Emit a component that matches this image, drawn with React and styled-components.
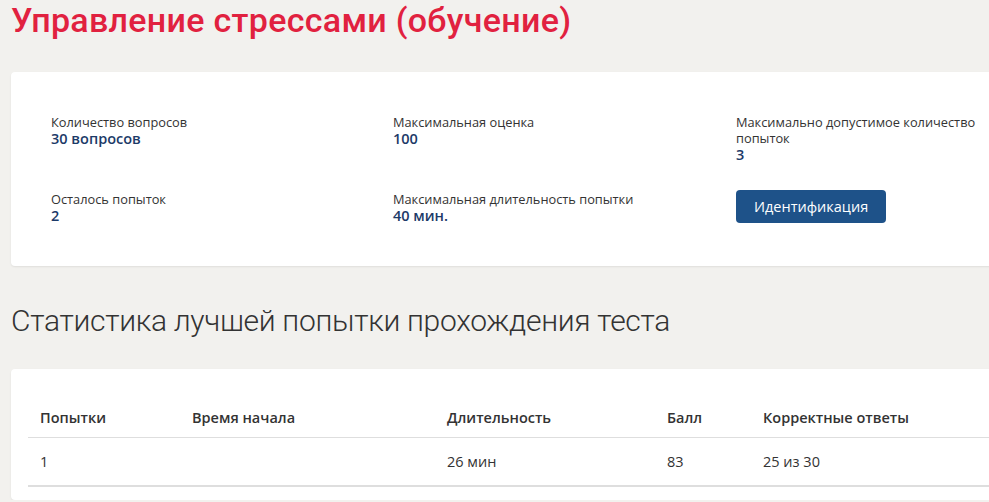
import React from "react";
import styled, { createGlobalStyle } from "styled-components";

const Global = createGlobalStyle`
  html, body { margin: 0; padding: 0; background: #f2f1ee; overflow: hidden; }
  body { font-family: "Open Sans", "Noto Sans", sans-serif; color: #333; }
`;

const Page = styled.div`
  width: 1040px;
  padding: 0 0 0 11px;
  display: flex;
  flex-direction: column;
`;

const Title = styled.h1`
  margin: 0;
  padding-top: 0;
  font-family: "Roboto", "Noto Sans", sans-serif;
  font-weight: 500;
  font-size: 34px;
  line-height: 40px;
  color: #e1213f;
  letter-spacing: 0.3px;
`;

const Card = styled.section`
  background: #fff;
  border-radius: 4px;
  box-shadow: 0 1px 2px rgba(0, 0, 0, 0.08);
  margin-top: ${(p) => p.$top}px;
`;

const InfoGrid = styled.div`
  display: grid;
  grid-template-columns: 342px 343px 300px;
  row-gap: 28px;
  padding: 42px 0 42px 40px;
`;

const Field = styled.div`
  display: flex;
  flex-direction: column;
  align-items: flex-start;
`;

const Label = styled.div`
  font-size: 12.8px;
  line-height: 16px;
  color: #333;
  max-width: 250px;
`;

const Value = styled.div`
  font-size: 14.5px;
  line-height: 17px;
  font-weight: 600;
  color: #1c3a68;
`;

const Button = styled.button`
  margin-top: -1px;
  height: 33px;
  padding: 0 18px;
  border: none;
  border-radius: 4px;
  background: #1e5289;
  color: #fff;
  font-family: "Open Sans", sans-serif;
  font-size: 14.5px;
  cursor: pointer;
`;

const Heading = styled.h2`
  margin: 38px 0 0;
  font-family: "Roboto", "Open Sans", sans-serif;
  font-weight: 300;
  font-size: 30px;
  line-height: 34px;
  color: #333;
  letter-spacing: -0.3px;
`;

const TableWrap = styled.div`
  padding: 29px 0 0 17px;
  height: 102px;
`;

const Table = styled.table`
  border-collapse: collapse;
  table-layout: fixed;
  width: 1000px;
  font-size: 14.5px;
  color: #333;
`;

const Th = styled.th`
  box-sizing: border-box;
  text-align: left;
  font-weight: 600;
  padding: 0 0 0 12px;
  height: 39px;
  border-bottom: 1px solid #dedede;
  width: ${(p) => p.$w}px;
`;

const Td = styled.td`
  padding: 0 0 0 12px;
  height: 47px;
  border-bottom: 2px solid #dedede;
`;

const info = [
  { label: "Количество вопросов", value: "30 вопросов" },
  { label: "Максимальная оценка", value: "100" },
  { label: "Максимально допустимое количество попыток", value: "3" },
  { label: "Осталось попыток", value: "2" },
  { label: "Максимальная длительность попытки", value: "40 мин." },
];

const cols = [
  { t: "Попытки", w: 152 },
  { t: "Время начала", w: 255 },
  { t: "Длительность", w: 220 },
  { t: "Балл", w: 96 },
  { t: "Корректные ответы", w: 277 },
];

export default function App() {
  return (
    <>
      <Global />
      <Page>
        <Title>Управление стрессами (обучение)</Title>
        <Card $top={32}>
          <InfoGrid>
            {info.map((f) => (
              <Field key={f.label}>
                <Label>{f.label}</Label>
                <Value>{f.value}</Value>
              </Field>
            ))}
            <Field>
              <Button>Идентификация</Button>
            </Field>
          </InfoGrid>
        </Card>
        <Heading>Статистика лучшей попытки прохождения теста</Heading>
        <Card $top={31}>
          <TableWrap>
            <Table>
              <thead>
                <tr>
                  {cols.map((c) => (
                    <Th key={c.t} $w={c.w}>{c.t}</Th>
                  ))}
                </tr>
              </thead>
              <tbody>
                <tr>
                  <Td>1</Td>
                  <Td></Td>
                  <Td>26 мин</Td>
                  <Td>83</Td>
                  <Td>25 из 30</Td>
                </tr>
              </tbody>
            </Table>
          </TableWrap>
        </Card>
      </Page>
    </>
  );
}
